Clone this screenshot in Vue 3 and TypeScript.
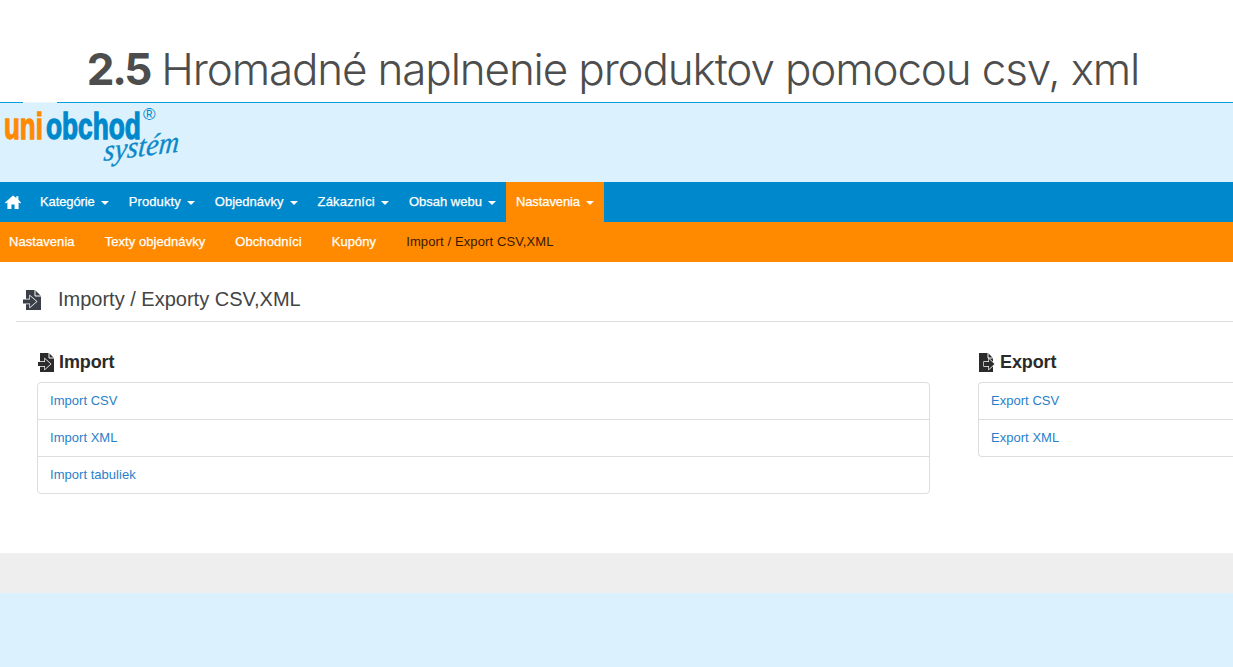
<script setup lang="ts">
const nav = ['Kategórie', 'Produkty', 'Objednávky', 'Zákazníci', 'Obsah webu']
const sub = ['Nastavenia', 'Texty objednávky', 'Obchodníci', 'Kupóny']
const imports = ['Import CSV', 'Import XML', 'Import tabuliek']
const exports_ = ['Export CSV', 'Export XML']
</script>

<template>
  <div class="page">
    <h1 class="title"><b>2.5</b> Hromadné naplnenie produktov pomocou csv, xml</h1>
    <header class="brand">
      <span class="notch"></span>
      <svg class="logo" width="190" height="72" viewBox="0 0 190 72">
        <text class="uni" transform="translate(4 36) scale(0.7 1)">uni</text>
        <text class="ob" transform="translate(46 36) scale(0.71 1)">obchod</text>
        <text x="143" y="17" class="reg">®</text>
        <text class="sys" transform="translate(103 58) rotate(-7) skewX(-12)" textLength="76" lengthAdjust="spacingAndGlyphs">systém</text>
      </svg>
    </header>
    <nav class="nav">
      <span class="home">
        <svg width="16" height="14" viewBox="0 0 16 14"><path d="M8 .5 0 7.600l.9 1L2.400 7.300V14h4V9.600h3.200V14h4V7.300l1.500 1.300.9-1L13.400 4.800V1.200h-2.100v1.800z" fill="#fff"/></svg>
      </span>
      <a v-for="n in nav" :key="n" class="item">{{ n }}<i class="caret"></i></a>
      <a class="item active">Nastavenia<i class="caret"></i></a>
    </nav>
    <div class="subnav">
      <a v-for="s in sub" :key="s">{{ s }}</a>
      <a class="cur">Import / Export CSV,XML</a>
    </div>
    <main class="main">
      <div class="head">
        <svg class="ic" width="20" height="20" viewBox="0 0 20 20">
          <path d="M4 0h9l6 6v14H4z" fill="#3a3f47"/>
          <path d="M13 0v6h6" fill="none" stroke="#fff" stroke-width="1"/>
          <path d="M1 9.500h7V6l6.500 5.500L8 17v-3.500H1z" fill="#3a3f47" stroke="#fff" stroke-width="1.300" paint-order="stroke"/>
        </svg>
        <h2>Importy / Exporty CSV,XML</h2>
      </div>
      <div class="cols">
        <section class="col left">
          <h3>
            <svg width="18" height="19" viewBox="0 0 18 19">
              <path d="M3 0h9l5 5v14H3z" fill="#2b2b2b"/>
              <path d="M12 0v5h5" fill="none" stroke="#fff" stroke-width="1"/>
              <path d="M1 9h7V6l5.500 5L8 16v-3H1z" fill="#2b2b2b" stroke="#fff" stroke-width="1.300" paint-order="stroke"/>
            </svg>
            Import
          </h3>
          <ul class="list">
            <li v-for="i in imports" :key="i"><a>{{ i }}</a></li>
          </ul>
        </section>
        <section class="col right">
          <h3>
            <svg width="18" height="19" viewBox="0 0 18 19">
              <path d="M1 0h9l5 5v14H1z" fill="#2b2b2b"/>
              <path d="M10 0v5h5" fill="none" stroke="#fff" stroke-width="1"/>
              <path d="M6 9h5V6l5.500 5L11 16v-3H6z" fill="#2b2b2b" stroke="#fff" stroke-width="1.300" paint-order="stroke"/>
            </svg>
            Export
          </h3>
          <ul class="list open">
            <li v-for="i in exports_" :key="i"><a>{{ i }}</a></li>
          </ul>
        </section>
      </div>
    </main>
    <div class="gray"></div>
    <div class="foot"></div>
  </div>
</template>

<style>
html, body { margin: 0; overflow: hidden; }
</style>

<style scoped>
.page { width: 1233px; height: 667px; display: flex; flex-direction: column; overflow: hidden; font-family: "Liberation Sans", Arial, sans-serif; background: #fff; }
.title { height: 102px; margin: 0; box-sizing: border-box; padding: 42px 7px 0 0; text-align: center; font-family: Inter, "Liberation Sans", sans-serif; font-weight: 300; font-size: 44px; letter-spacing: -1.150px; line-height: 54px; color: #4d4d4d; white-space: nowrap; }
.title b { font-weight: 700; letter-spacing: -2.300px; }
.brand { position: relative; height: 80px; flex: none; box-sizing: border-box; background: #dbf1fd; border-top: 1px solid #0a9ed9; }
.notch { position: absolute; left: 23px; top: -1px; width: 34px; height: 1px; background: #e9f6fd; }
.logo { display: block; }
.uni, .ob { font-family: "Liberation Sans", sans-serif; font-weight: 700; font-size: 37px; stroke-width: 1.3px; }
.uni { fill: #ff8a00; stroke: #ff8a00; }
.ob { fill: #0088cc; stroke: #0088cc; }
.reg { font-family: "Liberation Sans", sans-serif; font-size: 17px; fill: #0088cc; }
.sys { font-family: "Liberation Serif", serif; font-style: italic; font-size: 30px; fill: #0a88c8; stroke: #0a88c8; stroke-width: 0.3px; }
.nav { height: 40px; flex: none; display: flex; align-items: stretch; background: #0088cc; color: #fff; font-size: 13px; line-height: 38px; -webkit-text-stroke: 0.25px #fff; }
.home { width: 30px; display: flex; align-items: center; box-sizing: border-box; padding-left: 5px; }
.item { display: flex; align-items: center; padding: 0 10px; }
.item:nth-child(2) { letter-spacing: -0.1px; }
.item:nth-child(3) { letter-spacing: 0.1px; }
.item:nth-child(5) { letter-spacing: 0.2px; }
.item.active { letter-spacing: -0.1px; }
.caret { width: 0; height: 0; margin-left: 6px; margin-top: 2px; border-left: 4px solid transparent; border-right: 4px solid transparent; border-top: 4px solid #fff; }
.item.active { background: #ff8a00; }
.subnav { height: 40px; flex: none; box-sizing: border-box; padding: 0 0 2px 9px; display: flex; align-items: center; gap: 30px; background: #ff8a00; color: #fff; font-size: 13px; letter-spacing: 0.06px; -webkit-text-stroke: 0.25px #fff; }
.subnav .cur { color: #3a1800; -webkit-text-stroke: 0; letter-spacing: 0.12px; }
.main { height: 291px; flex: none; box-sizing: border-box; padding-left: 16px; }
.head { height: 60px; box-sizing: border-box; display: flex; align-items: center; gap: 16px; padding: 16px 0 0 6px; border-bottom: 1px solid #ddd; }
.head h2 { margin: 0; font-size: 20px; font-weight: 400; color: #444; }
.ic { flex: none; }
.cols { position: relative; display: flex; padding-left: 21px; }
.col h3 { display: flex; align-items: center; gap: 4px; height: 60px; margin: 0; box-sizing: border-box; padding-top: 20px; font-size: 18px; font-weight: 700; letter-spacing: -0.1px; color: #2b2b2b; }
.left { width: 893px; }
.right { margin-left: 48px; flex: 1; min-width: 0; }
.list { margin: 0; padding: 0; list-style: none; border: 1px solid #ddd; border-radius: 4px; font-size: 13px; }
.list.open { border-right: 0; border-radius: 4px 0 0 4px; }
.list li { box-sizing: border-box; display: flex; align-items: center; padding: 0 0 2px 12px; border-top: 1px solid #ddd; height: 37px; }
.list li:first-child { border-top: 0; height: 36px; }
.list a { color: #2a7fc9; letter-spacing: 0.03px; }
.gray { height: 40px; flex: none; background: #eee; }
.foot { flex: 1; background: #dbf1fd; }
</style>
